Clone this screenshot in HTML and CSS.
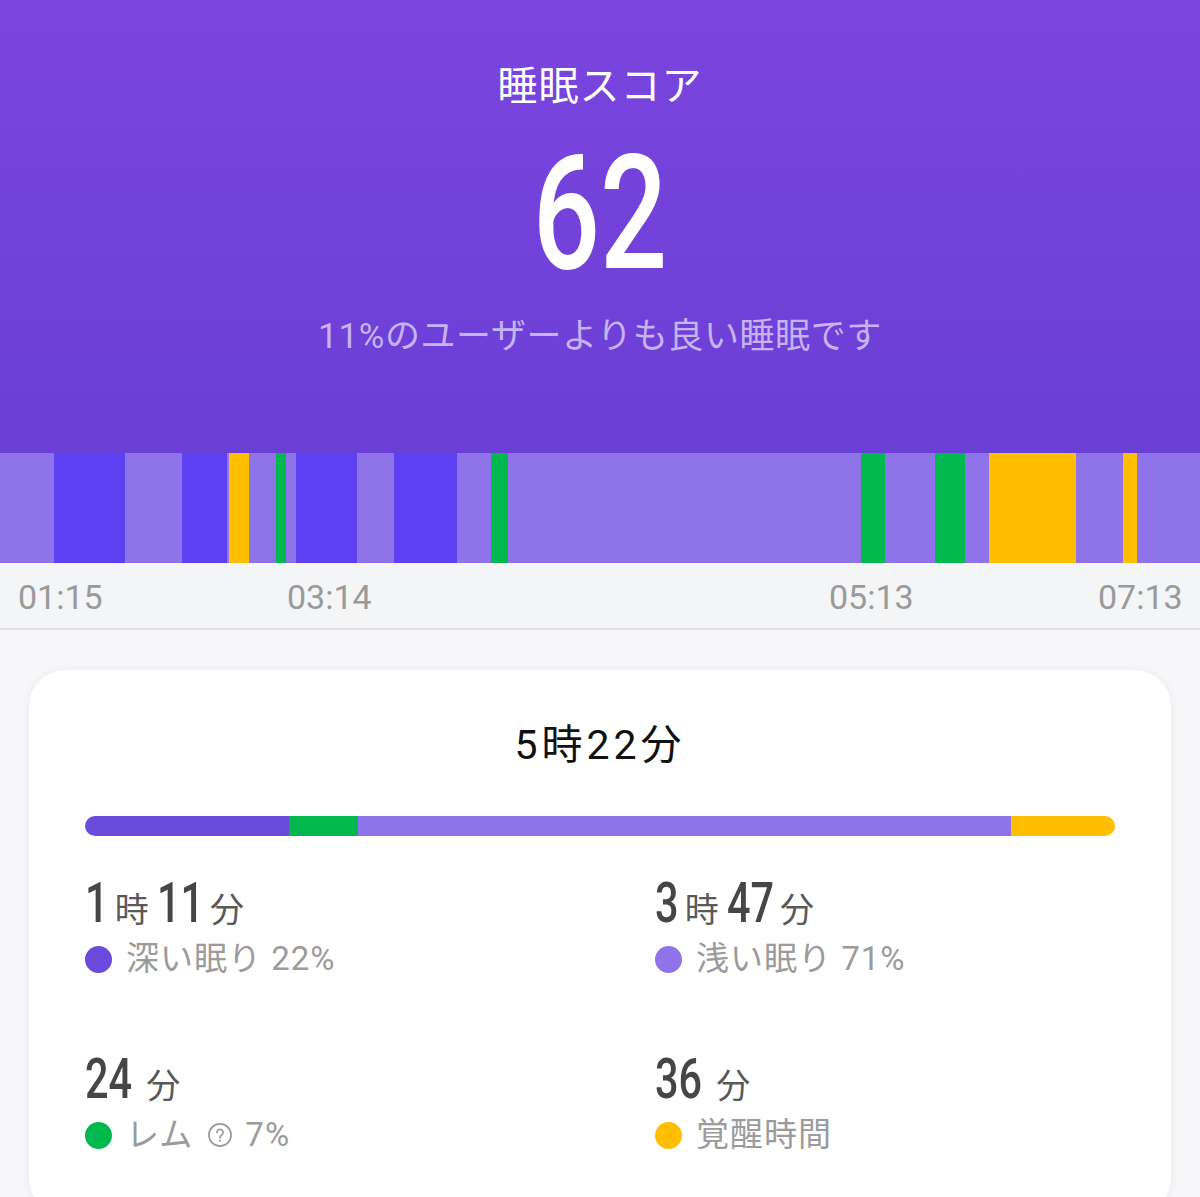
FILE: index.html
```html
<!DOCTYPE html>
<html lang="ja">
<head>
  <meta charset="UTF-8">
  <meta name="viewport" content="width=device-width, initial-scale=1.0">
  <title>睡眠スコア</title>
  <link rel="stylesheet" href="styles.css">
</head>
<body>
  <header class="score">
    <h1 class="score-title">睡眠スコア</h1>
    <div class="score-value"><span>62</span></div>
    <p class="score-note">11%のユーザーよりも良い睡眠です</p>
  </header>

  <!-- 睡眠ステージのタイムライン (flex の比率 = 長さ) -->
  <div class="timeline">
    <div class="stage light" style="flex: 54"></div>
    <div class="stage deep" style="flex: 71"></div>
    <div class="stage light" style="flex: 57"></div>
    <div class="stage deep" style="flex: 45"></div>
    <div class="stage light" style="flex: 2"></div>
    <div class="stage awake" style="flex: 20"></div>
    <div class="stage light" style="flex: 27"></div>
    <div class="stage rem" style="flex: 10"></div>
    <div class="stage light" style="flex: 10"></div>
    <div class="stage deep" style="flex: 61"></div>
    <div class="stage light" style="flex: 37"></div>
    <div class="stage deep" style="flex: 63"></div>
    <div class="stage light" style="flex: 34"></div>
    <div class="stage rem" style="flex: 17"></div>
    <div class="stage light" style="flex: 353"></div>
    <div class="stage rem" style="flex: 24"></div>
    <div class="stage light" style="flex: 50"></div>
    <div class="stage rem" style="flex: 30"></div>
    <div class="stage light" style="flex: 24"></div>
    <div class="stage awake" style="flex: 87"></div>
    <div class="stage light" style="flex: 47"></div>
    <div class="stage awake" style="flex: 14"></div>
    <div class="stage light" style="flex: 63"></div>
  </div>
  <div class="axis">
    <span class="tick" style="left: 18px">01:15</span>
    <span class="tick" style="left: 287px">03:14</span>
    <span class="tick" style="left: 829px">05:13</span>
    <span class="tick" style="left: 1098px">07:13</span>
  </div>

  <section class="card">
    <h2 class="total">5時22分</h2>
    <div class="ratio">
      <div class="deep" style="flex: 204"></div>
      <div class="rem" style="flex: 69"></div>
      <div class="light" style="flex: 653"></div>
      <div class="awake" style="flex: 104"></div>
    </div>

    <div class="stats">
      <div class="stat">
        <div class="amount"><span class="num">1</span><span class="unit">時</span><span class="num two">11</span><span class="unit">分</span></div>
        <div class="label"><i class="dot deep"></i>深い眠り 22%</div>
      </div>
      <div class="stat">
        <div class="amount"><span class="num">3</span><span class="unit">時</span><span class="num two">47</span><span class="unit">分</span></div>
        <div class="label"><i class="dot light"></i>浅い眠り 71%</div>
      </div>
      <div class="stat">
        <div class="amount"><span class="num two">24</span><span class="unit spaced">分</span></div>
        <div class="label"><i class="dot rem"></i>レム
          <svg class="help" viewBox="0 0 24 24" width="26" height="26">
            <circle cx="12" cy="12" r="10.2" fill="none" stroke="#9a9a9a" stroke-width="1.6"/>
            <path d="M9.2 9.6a2.8 2.8 0 1 1 4.3 2.4c-.9.6-1.5 1.1-1.5 2.3v.4" fill="none" stroke="#9a9a9a" stroke-width="1.6" stroke-linecap="round"/>
            <circle cx="12" cy="17.4" r="1" fill="#9a9a9a"/>
          </svg>
          7%</div>
      </div>
      <div class="stat">
        <div class="amount"><span class="num two">36</span><span class="unit spaced">分</span></div>
        <div class="label"><i class="dot awake"></i>覚醒時間</div>
      </div>
    </div>
  </section>
</body>
</html>
```

FILE: styles.css
```css
body {
  margin: 0;
  background-color: #f7f7f9;
  font-family: Roboto, "Noto Sans CJK JP", sans-serif;
  overflow: hidden;
}

/* ヘッダー */
.score {
  height: 453px;
  background: linear-gradient(180deg, #7b45df 0%, #6a3fd6 100%);
  display: flex;
  flex-direction: column;
  align-items: center;
  color: #fff;
}

.score-title {
  margin: 58px 0 0;
  font-size: 40px;
  line-height: 50px;
  font-weight: 400;
  font-family: "Noto Sans CJK JP", sans-serif;
  letter-spacing: 1px;
}

.score-value {
  margin-top: 26px;
  font-size: 160px;
  line-height: 160px;
  font-weight: 500;
}

.score-value span {
  display: inline-block;
  transform: scaleX(0.74);
}

.score-note {
  margin: 20px 0 0;
  font-size: 35px;
  line-height: 46px;
  letter-spacing: 0.6px;
  color: #c6b3f3;
}

/* タイムライン */
.timeline {
  display: flex;
  height: 110px;
}

.deep { background-color: #5c40f2; }
.light { background-color: #8e74e8; }
.rem { background-color: #00b84e; }
.awake { background-color: #ffbf00; }

.axis {
  position: relative;
  height: 65px;
  background-color: #f4f5f7;
  border-bottom: 2px solid #e1e1e4;
}

.tick {
  position: absolute;
  top: 2px;
  line-height: 65px;
  font-size: 34px;
  color: #9a9a9a;
}

/* カード */
.card {
  margin: 40px 29px 0;
  padding: 47px 56px 60px;
  background-color: #fff;
  border-radius: 36px;
  box-shadow: 0 1px 8px rgba(0, 0, 0, 0.07);
}

.total {
  margin: 0;
  text-align: center;
  font-size: 41px;
  line-height: 56px;
  font-weight: 400;
  color: #111;
  letter-spacing: 4px;
}

.ratio {
  display: flex;
  height: 20px;
  margin-top: 43px;
  border-radius: 10px;
  overflow: hidden;
}

.ratio .deep { background-color: #6a4bdb; }

.stats {
  display: grid;
  grid-template-columns: 1fr 1fr;
  column-gap: 110px;
  row-gap: 68px;
  margin-top: 35px;
}

.amount {
  font-size: 56px;
  line-height: 64px;
  font-weight: 500;
  color: #464646;
  white-space: nowrap;
}

.num {
  display: inline-block;
  transform: scaleX(0.74);
  transform-origin: 0 0;
  margin-right: -0.146em;
}

.num.two {
  margin-right: -0.292em;
}

.unit {
  font-family: "Noto Sans CJK JP", sans-serif;
  font-size: 34px;
  font-weight: 400;
  line-height: 1;
  color: #595959;
  margin: 0 8px 0 6px;
}

.unit.spaced {
  margin-left: 14px;
}

.label {
  display: flex;
  align-items: center;
  margin-top: 4px;
  font-size: 33px;
  line-height: 40px;
  letter-spacing: 1px;
  color: #9b9b9b;
  white-space: nowrap;
}

.dot {
  width: 27px;
  height: 27px;
  border-radius: 50%;
  margin-right: 14px;
}

.dot.deep { background-color: #6a4bdb; }

.help {
  margin: 0 12px 0 14px;
}
```
